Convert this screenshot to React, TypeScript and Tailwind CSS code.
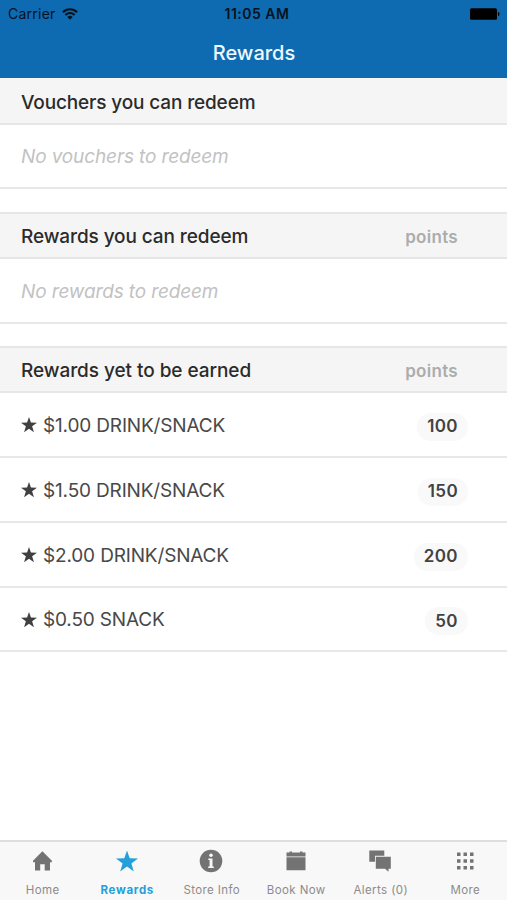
import type { ReactNode } from "react";

const STAR = "M12 0l2.9 8.4 9.1.1-7.3 5.4L19.4 23 12 17.6 4.6 23l2.7-9.1L0 8.500l9.100-.1z";

function SectionHeader({ title, tracking, points, first }: { title: string; tracking: string; points?: boolean; first?: boolean }) {
  return (
    <div
      className={`flex h-[47px] items-center justify-between border-b-2 border-[#e6e6e6] bg-[#f5f5f5] pr-[49px] pl-[21px] ${
        first ? "pt-[4px]" : "border-t-2 pt-[2px]"
      }`}
    >
      <h2 className={`text-[19px] leading-6 font-medium whitespace-nowrap text-[#2b2b2b] ${tracking}`}>{title}</h2>
      {points && <span className="text-[17px] leading-5 font-semibold tracking-[0.3px] text-[#acacac]">points</span>}
    </div>
  );
}

function EmptyRow({ text, tracking, height }: { text: string; tracking: string; height: string }) {
  return (
    <div className={`flex items-center border-b-2 border-[#e7e7e7] pt-[2px] pl-[21px] ${height}`}>
      <p className={`text-[19px] leading-6 whitespace-nowrap text-[#c2c2c2] italic ${tracking}`}>{text}</p>
    </div>
  );
}

function RewardRow({ name, points, height }: { name: string; points: string; height: string }) {
  return (
    <div className={`flex items-center border-b-2 border-[#e7e7e7] pt-[2px] pr-[39px] pl-[21px] ${height}`}>
      <svg viewBox="0 0 24 24" className="mr-[6px] -mt-px h-4 w-4" fill="#404040">
        <path d={STAR} />
      </svg>
      <span className="text-[19px] leading-6 tracking-[-0.16px] whitespace-nowrap text-[#484848]">{name}</span>
      <span className="mt-[2px] ml-auto flex h-[28px] items-center rounded-full bg-[#f9f9f9] px-[10px] text-[17px] leading-none font-semibold tracking-[0.4px] text-[#424242]">
        {points}
      </span>
    </div>
  );
}

function Tab({ label, active, children }: { label: string; active?: boolean; children: ReactNode }) {
  return (
    <div
      className={`flex flex-1 flex-col items-center text-[11.500px] leading-4 whitespace-nowrap ${
        active ? "font-bold text-[#259fd9]" : "text-[#8b8b8b]"
      }`}
    >
      <svg viewBox="0 0 24 24" className={`mt-[7px] mb-[9px] h-6 w-6 ${active ? "text-[#259fd9]" : "text-[#737373]"}`} fill="currentColor">
        {children}
      </svg>
      <span className={active ? "pl-px tracking-[0.7px]" : "pl-px tracking-[0.4px]"}>{label}</span>
    </div>
  );
}

export default function App() {
  return (
    <div className="flex h-[900px] w-[507px] flex-col overflow-hidden bg-white font-['Inter','Liberation_Sans',sans-serif]">
      <header className="h-[78px] shrink-0 bg-[#0e6bb1]">
        <div className="grid h-[27px] grid-cols-3 items-center pr-[7px] pl-[8px] text-[14px] leading-none text-[#06121f]">
          <div className="flex items-center gap-[6px]">
            <span className="tracking-[0.25px]">Carrier</span>
            <svg viewBox="0 0 16 12" className="h-[12px] w-[16px]" fill="none" stroke="#06121f" strokeWidth="2">
              <path d="M.9 4.300a10 10 0 0 1 14.200 0M3.400 7a6.500 6.500 0 0 1 9.200 0" />
              <path d="M8 11.800L5.300 9.100a3.800 3.800 0 0 1 5.400 0z" fill="#06121f" stroke="none" />
            </svg>
          </div>
          <span className="pl-[6px] text-center font-semibold tracking-[0.5px] whitespace-nowrap">11:05 AM</span>
          <svg viewBox="0 0 30 12" className="ml-auto h-[12px] w-[30px]" fill="#000">
            <rect x="0" y="0.200" width="27" height="11.500" rx="1.500" />
            <path d="M28 4c2 .5 2 3.500 0 4z" />
          </svg>
        </div>
        <h1 className="pt-[14px] pl-px text-center text-[20px] leading-6 font-medium text-[#edf8ff]">Rewards</h1>
      </header>

      <main className="flex-1">
        <section className="mb-[23px]">
          <SectionHeader title="Vouchers you can redeem" tracking="tracking-[-0.14px]" first />
          <EmptyRow text="No vouchers to redeem" tracking="tracking-[-0.13px]" height="h-[64px]" />
        </section>
        <section className="mb-[22px]">
          <SectionHeader title="Rewards you can redeem" tracking="tracking-[-0.1px]" points />
          <EmptyRow text="No rewards to redeem" tracking="tracking-[-0.13px]" height="h-[65px]" />
        </section>
        <section>
          <SectionHeader title="Rewards yet to be earned" tracking="tracking-[-0.06px]" points />
          <RewardRow name="$1.00 DRINK/SNACK" points="100" height="h-[65px]" />
          <RewardRow name="$1.50 DRINK/SNACK" points="150" height="h-[65px]" />
          <RewardRow name="$2.00 DRINK/SNACK" points="200" height="h-[65px]" />
          <RewardRow name="$0.50 SNACK" points="50" height="h-[64px]" />
        </section>
      </main>

      <nav className="flex h-[60px] shrink-0 border-t-2 border-[#dedede] bg-[#f8f8f8]">
        <Tab label="Home">
          <path d="M12.400 2.300L3 11.800v1.400h2v8.300h5.200v-6.300h4.500v6.300H20v-8.300h1.900v-1.400z" />
        </Tab>
        <Tab label="Rewards" active>
          <path d="M12 1.500l2.700 7.800 8.300.1-6.600 5 2.400 8L12 17.600l-6.800 4.800 2.400-8L1 9.400l8.300-.1z" />
        </Tab>
        <Tab label="Store Info">
          <circle cx="12" cy="12" r="11.300" />
          <path d="M9.300 9.500h4.200v8h1.300V19H9.200v-1.500h1.400V11H9.300z" fill="#f8f8f8" />
          <circle cx="12" cy="6.300" r="1.800" fill="#f8f8f8" />
        </Tab>
        <Tab label="Book Now">
          <path d="M2.500 3.500h3V2.500h2.500v1h8v-1h2.500v1h3v4h-19zM2.500 8.300h19v13h-19z" />
        </Tab>
        <Tab label="Alerts (0)">
          <path d="M1.300 1.500h15v5.300H7v6H1.300z" />
          <path d="M7.800 7.700h15v12h-2.300v3l-3.500-3H7.800z" />
        </Tab>
        <Tab label="More">
          <path d="M4 3.500h3.500V7H4zM10.500 3.500H14V7h-3.500zM17 3.500h3.500V7H17zM4 10.200h3.500v3.500H4zM10.500 10.200H14v3.500h-3.500zM17 10.200h3.500v3.500H17zM4 17h3.500v3.500H4zM10.500 17H14v3.500h-3.500zM17 17h3.500v3.500H17z" />
        </Tab>
      </nav>
    </div>
  );
}
